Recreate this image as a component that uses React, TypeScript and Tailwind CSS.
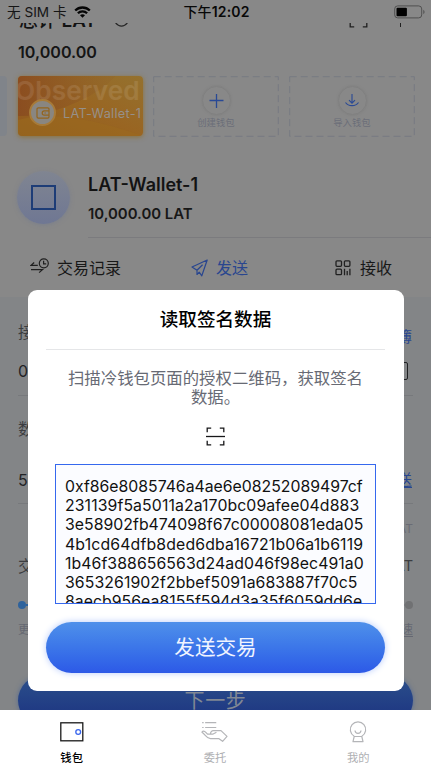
import type { ReactNode } from 'react';

const signedData = [
  { text: '0xf86e8085746a4ae6e08252089497cf', tracking: 'tracking-normal' },
  { text: '231139f5a5011a2a170bc09afee04d883', tracking: 'tracking-[0.11px]' },
  { text: '3e58902fb474098f67c00008081eda05', tracking: 'tracking-[0.04px]' },
  { text: '4b1cd64dfb8ded6dba16721b06a1b6119', tracking: 'tracking-[0.16px]' },
  { text: '1b46f388656563d24ad046f98ec491a0', tracking: 'tracking-[0.08px]' },
  { text: '3653261902f2bbef5091a683887f70c5', tracking: 'tracking-[0.09px]' },
  { text: '8aecb956ea8155f594d3a35f6059dd6e', tracking: 'tracking-[0.04px]' },
];

function StatusBar() {
  return (
    <div className="grid h-[23px] shrink-0 grid-cols-3 items-center pt-px pr-[5px] pl-[7px] text-[14px] leading-[22px] text-[#151515]">
      <div className="flex items-center gap-[7px]">
        <span className="text-[13.6px] whitespace-nowrap">无 SIM 卡</span>
        <svg width="17" height="12" viewBox="0 0 17 12" fill="none" stroke="#050505" strokeWidth="2.3">
          <path d="M1.2 4.5C5.2 .5 11.8 .5 15.8 4.5" />
          <path d="M3.9 7.2C6.4 4.7 10.6 4.7 13.1 7.2" />
          <path d="M8.5 11.8 6 9.2c1.5-1.3 3.5-1.3 5 0z" fill="#050505" stroke="none" />
        </svg>
      </div>
      <span className="text-center font-semibold tracking-[0.15px] whitespace-nowrap text-[#080808]">
        <span className="font-medium">下午</span>12:02
      </span>
      <svg className="justify-self-end" width="32" height="14" viewBox="0 0 32 14">
        <rect x=".7" y=".9" width="27" height="12" rx="3" fill="none" stroke="#505050" />
        <rect x="2.5" y="2.7" width="10.4" height="8.6" rx="1" fill="#000" />
        <path d="M29.3 4.8c1.7.8 1.7 3.6 0 4.4z" fill="#505050" />
      </svg>
    </div>
  );
}

function ScanIcon({ line = true, color = '#171719' }: { line?: boolean; color?: string }) {
  return (
    <svg width="19" height="19" viewBox="0 0 19 19" fill="none" stroke={color} strokeWidth="1.3">
      <path d="M1.2 5.2v-4h4M13.8 1.2h4v4M1.2 13.8v4h4M13.8 17.8h4v-4" />
      {line && <path d="M0 9.5h19" />}
    </svg>
  );
}

function WalletAction({ label, children }: { label: string; children: ReactNode }) {
  return (
    <div className="relative flex h-[61px] w-[126px] shrink-0 flex-col items-center pt-[10px]">
      <svg className="absolute inset-0" width="126" height="61" fill="none">
        <rect x=".7" y=".7" width="124.6" height="59.6" stroke="#777a82" strokeDasharray="7 4" />
      </svg>
      <div className="flex size-[29px] items-center justify-center rounded-full border border-[#808080] shadow-[0_0_2px_#7b7b7b]">
        {children}
      </div>
      <span className="mt-[1px] text-[9.4px] leading-[14px] text-[#6b6e78]">{label}</span>
    </div>
  );
}

function Page() {
  return (
    <div className="flex min-h-0 flex-1 flex-col overflow-hidden bg-[#838587]">
      <div className="flex h-[297px] shrink-0 flex-col bg-[#888]">
        <StatusBar />
        <div className="flex h-[7px] shrink-0 items-end overflow-hidden pl-[19px]">
          <span className="-mb-[3px] w-[96px] text-[18.8px] leading-[24px] font-medium whitespace-nowrap text-[#131313]">
            总计 <span className="font-semibold">LAT</span>
          </span>
          <svg className="mb-[3px]" width="14" height="8" fill="none" stroke="#252525" strokeWidth="1.2">
            <path d="M0 3c4 5.5 9 5.5 13 0" />
          </svg>
          <div className="mb-[2px] ml-[220px] flex items-end">
            <ScanIcon line={false} color="#202020" />
          </div>
          <svg className="mb-[3px] ml-[25px]" width="16" height="16" stroke="#202020"><path d="M7.5 0v16" /></svg>
        </div>
        <div className="mt-[10px] h-[24px] pl-[18px] text-[16.1px] leading-[24px] font-semibold text-[#151515]">10,000.00</div>
        <div className="mt-[12px] flex h-[61px] shrink-0">
          <div className="h-[60px] w-[7px] rounded-r-[4px] bg-[#80848a]" />
          <div className="relative ml-[11px] flex h-[60px] w-[125px] items-end overflow-hidden rounded-[4px] bg-linear-to-tr from-[#8f5d1d] via-[#996522] to-[#94712e] pb-[10px] pl-[11px] shadow-[0_1px_5px_#8d7138]">
            <svg className="absolute inset-0" width="125" height="60">
              <defs>
                <linearGradient id="rust" x1="0" y1="0" x2="1" y2="0">
                  <stop offset="0" stopColor="#884820" />
                  <stop offset="1" stopColor="#8c5b26" stopOpacity=".2" />
                </linearGradient>
              </defs>
              <path d="M0 0h98Q70 30 0 44z" fill="url(#rust)" opacity=".8" />
              <path d="M0 40q60-4 125 20H0z" fill="#9b691e" opacity=".5" />
            </svg>
            <span className="absolute -top-[1px] -left-[3px] text-[26.2px] leading-[32px] font-semibold tracking-[0.1px] text-white/10">Observed</span>
            <div className="relative flex size-[27px] shrink-0 items-center justify-center rounded-full border-2 border-[#a77a38] bg-[#898681]">
              <svg width="14" height="12" viewBox="0 0 14 12" fill="none" stroke="#94651e" strokeWidth="1.2">
                <path d="M13 3.8V2.2a1.3 1.3 0 0 0-1.3-1.3H2.3A1.3 1.3 0 0 0 1 2.2v7.6a1.3 1.3 0 0 0 1.3 1.3h9.4A1.3 1.3 0 0 0 13 9.8V8.2M13 3.9H8.3a2.1 2.1 0 0 0 0 4.2H13zM8.5 6h1.3" />
              </svg>
            </div>
            <span className="relative ml-[7px] text-[12.7px] leading-[24px] tracking-[0.3px] whitespace-nowrap text-[#969089]">LAT-Wallet-1</span>
          </div>
          <div className="ml-[10px] flex gap-[10px]">
            <WalletAction label="创建钱包">
              <svg width="17" height="17" stroke="#294995" strokeWidth="1.3"><path d="M8.5 2v14M1.5 8.5h14" /></svg>
            </WalletAction>
            <WalletAction label="导入钱包">
              <svg width="16" height="15" viewBox="0 0 16 15" fill="none" stroke="#294995" strokeWidth="1.1">
                <path d="M8 1v9M5 7.2l3 3 3-3M1.5 9.5c3 4.2 10 4.2 13 0" />
              </svg>
            </WalletAction>
          </div>
        </div>
        <div className="flex h-[101px] shrink-0">
          <div className="mt-[34px] ml-[17px] flex size-[53px] shrink-0 items-center justify-center rounded-full bg-linear-to-b from-[#808591] to-[#6f7793] shadow-[0_1px_4px_#7a7f8c]">
            <div className="size-[25px] border-2 border-[#1d3c77]" />
          </div>
          <div className="ml-[18px] flex flex-1 flex-col border-b border-[#7b7b7e] pt-[37px]">
            <span className="text-[18px] leading-[22px] font-semibold text-[#131313]">LAT-Wallet-1</span>
            <span className="mt-[9px] text-[14.9px] leading-[18px] font-semibold text-[#171717]">10,000.00 LAT</span>
          </div>
        </div>
        <div className="flex h-[59px] items-center text-[16px] text-[#181818]">
          <div className="ml-[30px] flex w-[161px] items-center gap-[8px]">
            <svg className="mb-[4px]" width="19" height="16" viewBox="0 0 19 16" fill="none" stroke="#202020" strokeWidth="1.2">
              <circle cx="13.8" cy="5.3" r="4.5" />
              <path d="M13.6 2.8v3h2.6M7.8 7.3H1L4.2 4.5M1 11.6h11.5l-3.4 3" />
            </svg>
            交易记录
          </div>
          <div className="flex w-[144px] items-center gap-[8px] text-[#29468f]">
            <svg width="17" height="18" viewBox="0 0 17 18" fill="none" stroke="#29468f" strokeWidth="1.2" strokeLinejoin="round">
              <path d="M16.2 1 1 8l5 3.2v4.3l2.2-2.3 2.6 3.6zM6 11.2l5.6-5.4" />
            </svg>
            发送
          </div>
          <div className="flex items-center gap-[9px]">
            <svg width="16" height="16" viewBox="0 0 16 16" fill="none" stroke="#202020" strokeWidth="1.3">
              <rect x="1" y=".8" width="5.5" height="5.5" rx="1" />
              <rect x="9.4" y=".8" width="5.5" height="5.5" rx="1" />
              <rect x="1" y="9.2" width="5.5" height="5.5" rx="1" />
              <path d="M9.5 8.8v6.5M12.2 11v4.3M14.9 8.8v6.5" />
            </svg>
            接收
          </div>
        </div>
      </div>
      <div className="flex flex-col px-[18px] text-[16px] text-[#222325]">
        <div className="mt-[22px] flex h-[26px] items-center justify-between text-[#3c3d40]">
          <span>接收地址</span><span className="pt-[11px] pr-[1px] text-[15px] text-[#29468f]">地址簿</span>
        </div>
        <div className="mt-[13px] flex h-[38px] justify-between border-b border-[#77797c] leading-[26px]">
          <span>0x</span>
          <div className="mt-[4px] mr-[5px] h-[18px] w-[18px] rounded-[2px] border-[1.5px] border-[#202123]" />
        </div>
        <div className="mt-[20px] h-[26px] leading-[26px] text-[#3c3d40]">数量</div>
        <div className="mt-[25px] flex h-[37px] justify-between border-b border-[#77797c] leading-[26px]">
          <span>5</span><span className="pr-[1px] text-[15px] text-[#29468f] underline underline-offset-2">全部发送</span>
        </div>
        <div className="mt-[15px] h-[20px] text-right text-[12px] leading-[20px] text-[#6a6c75]">10,000.00 LAT</div>
        <div className="mt-[14px] flex h-[26px] items-center justify-between text-[#3c3d40]">
          <span>交易费用</span><span className="text-[14.5px]">0.00021 LAT</span>
        </div>
        <div className="mt-[21px] flex h-[9px] items-center">
          <span className="size-[8px] rounded-full bg-[#2e629c]" />
          <span className="h-[2px] flex-1 bg-[#2e629c]" />
          <span className="h-[2px] flex-1 bg-[#77797c]" />
          <span className="size-[8px] rounded-full bg-[#707173]" />
        </div>
        <div className="mt-[12px] flex justify-between text-[12px] leading-[18px] text-[#656872]">
          <span>更慢</span><span className="underline underline-offset-2">更快速</span>
        </div>
        <div className="mt-[36px] flex h-[51px] shrink-0 items-center justify-center rounded-full bg-linear-to-b from-[#2c508b] to-[#1c3080] text-[20px] tracking-[0.7px] text-[#818894] shadow-[0_0_5px_#526993]">下一步</div>
      </div>
    </div>
  );
}

function SignatureDialog() {
  return (
    <div className="absolute top-[290px] left-[27.5px] flex h-[401px] w-[376px] flex-col items-center rounded-[9px] bg-white px-[18.5px]">
      <h1 className="mt-[16px] text-[18.6px] leading-[26px] font-medium text-black">读取签名数据</h1>
      <div className="mt-[17px] h-px w-full bg-[#e5e6e8]" />
      <p className="mt-[19px] text-center text-[16.4px] leading-[19px] whitespace-nowrap text-[#676a74]">
        扫描冷钱包页面的授权二维码，获取签名<br />数据。
      </p>
      <div className="mt-[20px]"><ScanIcon /></div>
      <div className="mt-[18px] h-[140px] w-[321px] shrink-0 overflow-hidden border-[1.5px] border-[#3568ee] bg-[#fbfcff] pt-[12px] pl-[9px] text-[15.8px] leading-[19.2px] text-[#111]">
        {signedData.map((row) => (
          <div key={row.text} className={`whitespace-nowrap ${row.tracking}`}>{row.text}</div>
        ))}
      </div>
      <button className="mt-[18px] flex h-[51px] w-full shrink-0 items-center justify-center rounded-full bg-linear-to-b from-[#4f90ea] to-[#2d59e7] pt-[2px] text-[20.6px] text-[#f0f4ff] shadow-[0_0_7px_#b7cbfb]">发送交易</button>
    </div>
  );
}

function Tab({ label, active, children }: { label: string; active?: boolean; children: ReactNode }) {
  return (
    <div className="flex flex-col items-center pt-[10px]">
      <div className="flex h-[24px] items-center">{children}</div>
      <span className={`mt-[6px] text-[11.3px] leading-[16px] ${active ? 'font-medium text-black' : 'text-[#afb0b3]'}`}>{label}</span>
    </div>
  );
}

export default function App() {
  return (
    <main className="relative flex h-[766px] w-[431px] flex-col overflow-hidden bg-white font-['Inter','Noto_Sans_CJK_SC',sans-serif]">
      <Page />
      <SignatureDialog />
      <nav className="grid h-[56px] shrink-0 grid-cols-3 bg-white pr-px">
        <Tab label="钱包" active>
          <svg width="24" height="20" viewBox="0 0 24 20" fill="none">
            <rect x=".8" y=".8" width="22" height="18" stroke="#1a1a1a" strokeWidth="1.3" />
            <circle cx="18.2" cy="10" r="2.4" stroke="#3a66ed" strokeWidth="1.3" />
          </svg>
        </Tab>
        <Tab label="委托">
          <svg width="27" height="22" viewBox="0 0 27 22" fill="none" stroke="#b4b5b8" strokeWidth="1.2" strokeLinejoin="round" strokeLinecap="round">
            <path d="M1.6 1.7h.6M4.6 1.7h10.2M1.6 6.5h.6M4.6 6.5h10.2" />
            <path d="M1 11.2C1.2 9.5 3.5 9.8 4.8 11.3l1.7 1.9h5.2l3.3-1.7M9.6 13.2c-.3-2.3 1-3.6 3-3.6H20l6 5.8-4.4 4.9-3.6-2.6H9.5C5.5 17.7 4.5 13.5 1 11.2" />
          </svg>
        </Tab>
        <Tab label="我的">
          <svg width="18" height="22" viewBox="0 0 18 22" fill="none" stroke="#b4b5b8" strokeWidth="1.2" strokeLinejoin="round">
            <path d="M5.2 15.2a7.7 7.7 0 1 1 7.6 0M6 9.5c.4 3.8 5.6 3.8 6 0M5.2 15.5h7.6l1.2 5.2H4z" />
          </svg>
        </Tab>
      </nav>
    </main>
  );
}
